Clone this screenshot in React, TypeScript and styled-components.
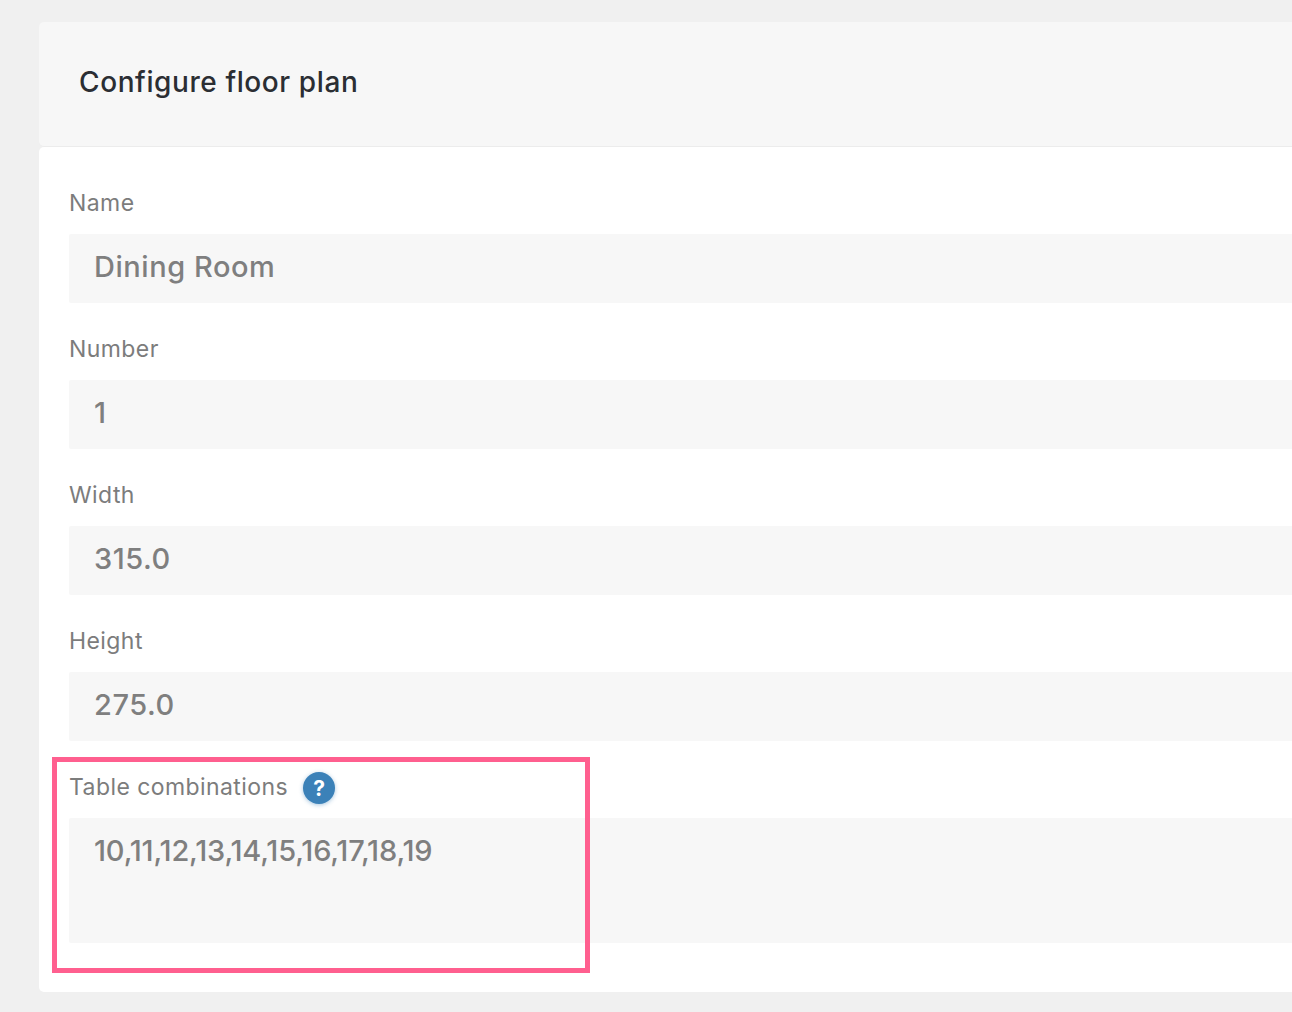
import * as React from 'react';
import styled, { createGlobalStyle } from 'styled-components';

const GlobalStyle = createGlobalStyle`
  html, body {
    margin: 0;
    height: 100%;
    overflow: hidden;
    background-color: #f0f0f0;
    font-family: "Inter", "Open Sans", sans-serif;
  }
`;

const Page = styled.div`
  padding: 22px 0 0 39px;
  width: 1500px;
`;

const Card = styled.div`
  display: flex;
  flex-direction: column;
`;

const Header = styled.div`
  height: 125px;
  display: flex;
  align-items: center;
  padding: 0 40px 4px;
  box-sizing: border-box;
  background-color: #f7f7f7;
  border-radius: 5px;
  border-bottom: 1px solid #ececec;
`;

const Title = styled.h1`
  margin: 0;
  font-size: 28px;
  font-weight: 500;
  letter-spacing: 0.6px;
  color: #2b2e33;
`;

const Body = styled.div`
  position: relative;
  display: flex;
  flex-direction: column;
  gap: 29px;
  padding: 39px 30px 49px;
  background-color: #fff;
  border-radius: 5px;
`;

const Field = styled.div`
  display: flex;
  flex-direction: column;
`;

const LabelRow = styled.div`
  display: flex;
  align-items: center;
  gap: 15px;
  height: 34px;
  margin-bottom: 14px;
`;

const Label = styled.label`
  font-size: 23px;
  font-weight: 400;
  letter-spacing: 0.42px;
  color: #7c7c7c;
`;

const Input = styled.div<{ $tall?: boolean }>`
  box-sizing: border-box;
  height: ${p => (p.$tall ? 125 : 69)}px;
  padding: 13px 25px;
  background-color: #f7f7f7;
  border-radius: 2px;
  font-size: 29px;
  line-height: 40px;
  font-weight: 500;
  color: #7f7f7f;
  letter-spacing: ${p => (p.$tall ? -0.17 : 0.55)}px;
`;

const HelpBadge = styled.span`
  width: 32px;
  height: 32px;
  margin-top: 2px;
  border-radius: 50%;
  display: flex;
  align-items: center;
  justify-content: center;
  background-color: #3b81b8;
  box-shadow: 0 1px 4px rgba(59, 129, 184, 0.45);
  color: #fff;
  font-size: 21px;
  font-weight: 700;
`;

const Highlight = styled.div`
  position: absolute;
  left: 13px;
  top: 610px;
  width: 528px;
  height: 206px;
  border: 5px solid #ff5f8f;
  pointer-events: none;
`;

const fields = [
  { label: 'Name', value: 'Dining Room' },
  { label: 'Number', value: '1' },
  { label: 'Width', value: '315.0' },
  { label: 'Height', value: '275.0' },
];

export default function App() {
  return (
    <Page>
      <GlobalStyle />
      <Card>
        <Header>
          <Title>Configure floor plan</Title>
        </Header>
        <Body>
          {fields.map(({ label, value }) => (
            <Field key={label}>
              <LabelRow>
                <Label>{label}</Label>
              </LabelRow>
              <Input>{value}</Input>
            </Field>
          ))}
          <Field>
            <LabelRow>
              <Label>Table combinations</Label>
              <HelpBadge>?</HelpBadge>
            </LabelRow>
            <Input $tall>10,11,12,13,14,15,16,17,18,19</Input>
          </Field>
          <Highlight />
        </Body>
      </Card>
    </Page>
  );
}
